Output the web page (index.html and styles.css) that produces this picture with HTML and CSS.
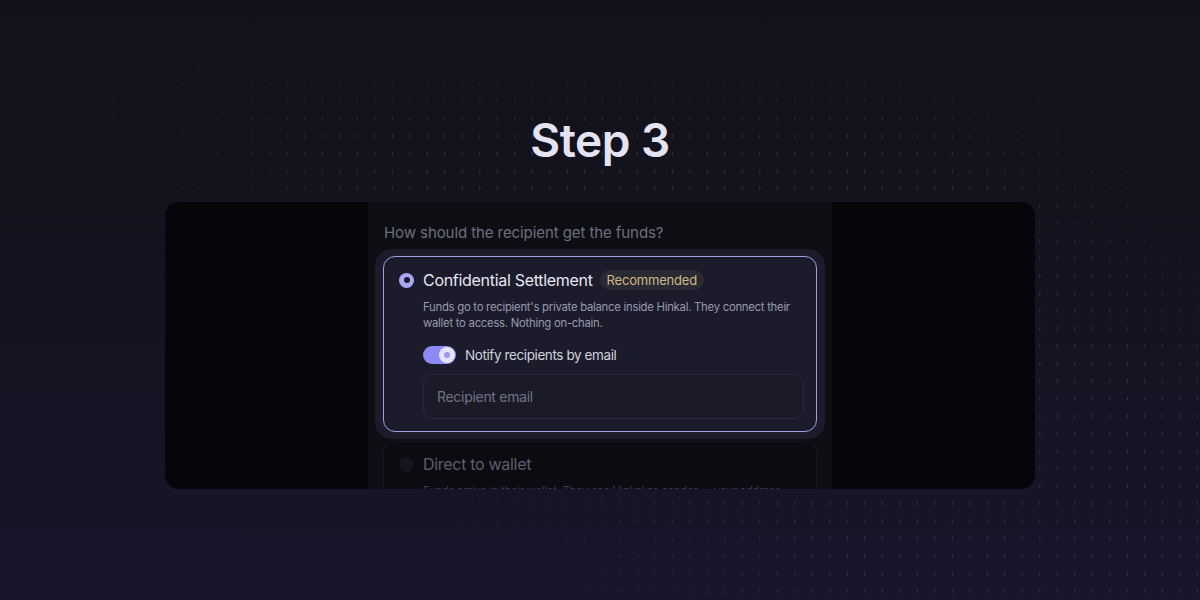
FILE: index.html
```html
<!DOCTYPE html>
<html lang="en">
<head>
    <meta charset="UTF-8">
    <meta name="viewport" content="width=device-width, initial-scale=1.0">
    <title>Step 3</title>
    <link rel="stylesheet" href="styles.css">
</head>
<body>

<!-- dotted backdrop -->
<div class="dots-fade"><div class="dots-diag"><div class="dots"></div></div></div>

<main class="stage">
    <h1 class="step-title">Step 3</h1>

    <section class="frame">
        <div class="panel">
            <p class="question">How should the recipient get the funds?</p>

            <div class="option-ring">
                <div class="option selected">
                    <div class="option-head">
                        <span class="radio on"></span>
                        <span class="option-title">Confidential Settlement</span>
                        <span class="badge">Recommended</span>
                    </div>
                    <div class="option-body">
                        <p class="option-desc">Funds go to recipient's private balance inside Hinkal. They connect their wallet to access. Nothing on-chain.</p>
                        <label class="notify">
                            <span class="toggle"><span class="knob"></span></span>
                            Notify recipients by email
                        </label>
                        <input class="email" type="text" placeholder="Recipient email">
                    </div>
                </div>
            </div>

            <div class="option muted">
                <div class="option-head">
                    <span class="radio"></span>
                    <span class="option-title">Direct to wallet</span>
                </div>
                <div class="option-body">
                    <p class="option-desc">Funds arrive in their wallet. They see Hinkal as sender — your address stays private.</p>
                </div>
            </div>
        </div>
    </section>
</main>

</body>
</html>
```

FILE: styles.css
```css
* {
    box-sizing: border-box;
}
html, body {
    margin: 0;
    height: 600px;
}
body {
    font-family: Inter, "Liberation Sans", sans-serif;
    background: linear-gradient(to bottom, #12121c 0%, #13131f 45%, #17162b 100%);
    color: #e4e4f0;
    overflow: hidden;
    position: relative;
}

/* dotted backdrop: three nested masks */
.dots-fade {
    position: absolute;
    inset: 0;
    -webkit-mask-image: linear-gradient(to bottom, transparent 38px, #000 140px);
    mask-image: linear-gradient(to bottom, transparent 38px, #000 140px);
}
.dots-diag {
    position: absolute;
    inset: 0;
    -webkit-mask-image: linear-gradient(45deg, transparent 27%, #000 48%, #000 76%, transparent 90%);
    mask-image: linear-gradient(45deg, transparent 27%, #000 48%, #000 76%, transparent 90%);
}
.dots {
    position: absolute;
    inset: 0;
    background-image: linear-gradient(to right, transparent 7px, #34344a 7px, #34344a 8px, transparent 8px);
    background-size: 17.5px 17.5px;
    -webkit-mask-image: linear-gradient(to bottom, transparent 12px, #000 12px, #000 16px, transparent 16px);
    -webkit-mask-size: 17.5px 17.5px;
    mask-image: linear-gradient(to bottom, transparent 12px, #000 12px, #000 16px, transparent 16px);
    mask-size: 17.5px 17.5px;
}

.stage {
    position: relative;
    display: flex;
    flex-direction: column;
    align-items: center;
    padding-top: 112px;
}
.step-title {
    margin: 0;
    font-size: 46px;
    line-height: 56px;
    font-weight: 600;
    letter-spacing: -0.5px;
    color: #e3e3f1;
}

.frame {
    margin-top: 34px;
    width: 870px;
    height: 287px;
    background: #060509;
    border-radius: 14px;
    overflow: hidden;
    display: flex;
    justify-content: center;
}
.panel {
    width: 464px;
    background: #0d0d14;
    padding: 22px 7px 0;
}
.question {
    margin: 0 0 7px 9px;
    font-size: 15px;
    line-height: 18px;
    letter-spacing: -0.08px;
    color: #6f6f7e;
}

.option-ring {
    background: #1b1b29;
    border-radius: 16px;
    padding: 7px 8px;
}
.option {
    border-radius: 12px;
    padding: 12px 13px 13px 15px;
}
.option.selected {
    background: #1b1b2c;
    border: 1.5px solid #a19de6;
    padding-bottom: 12px;
}
.option.muted {
    margin: 2px 8px 0;
    background: #0b0b11;
    border: 1px solid #17171f;
    padding-top: 11px;
}
.option-head {
    display: flex;
    align-items: center;
    height: 22px;
}
.radio {
    width: 15px;
    height: 15px;
    border-radius: 50%;
    background: #15151d;
    display: flex;
    align-items: center;
    justify-content: center;
    margin-right: 9px;
}
.radio.on {
    background: #aba7f7;
}
.radio.on::after {
    content: "";
    width: 6px;
    height: 6px;
    border-radius: 50%;
    background: #1b1b2c;
}
.option-title {
    font-size: 16px;
    font-weight: 400;
    letter-spacing: -0.3px;
    color: #e6e6f0;
}
.muted .option-title {
    color: #5e5e6b;
}
.badge {
    margin-left: 7px;
    padding: 1px 7px;
    border-radius: 10px;
    background: #292932;
    color: #cfb888;
    font-size: 13px;
    line-height: 18px;
    letter-spacing: -0.2px;
}
.option-body {
    padding-left: 24px;
}
.option-desc {
    margin: 8px 0 0;
    font-size: 11.3px;
    line-height: 16px;
    letter-spacing: -0.25px;
    color: #9a9aab;
}
.muted .option-desc {
    color: #3e3e49;
    margin-top: 8px;
}
.notify {
    display: flex;
    align-items: center;
    gap: 9px;
    margin-top: 15px;
    font-size: 13.5px;
    letter-spacing: -0.4px;
    color: #d3d3dd;
}
.toggle {
    width: 33px;
    height: 18px;
    border-radius: 9px;
    background: #8e8af5;
    display: flex;
    justify-content: flex-end;
    align-items: center;
    padding-right: 1px;
}
.knob {
    width: 16px;
    height: 16px;
    border-radius: 50%;
    background: #e4e2ff;
    display: flex;
    align-items: center;
    justify-content: center;
}
.knob::after {
    content: "";
    width: 6px;
    height: 6px;
    border-radius: 50%;
    background: #9995f2;
}
.email {
    display: block;
    width: 381px;
    height: 45px;
    margin-top: 10px;
    padding: 0 13px;
    border-radius: 10px;
    border: 1px solid #2a2a3a;
    background: #1a1a28;
    font-family: inherit;
    font-size: 14px;
    letter-spacing: -0.3px;
    color: #d3d3dd;
    outline: none;
}
.email::placeholder {
    color: #737381;
}
```
